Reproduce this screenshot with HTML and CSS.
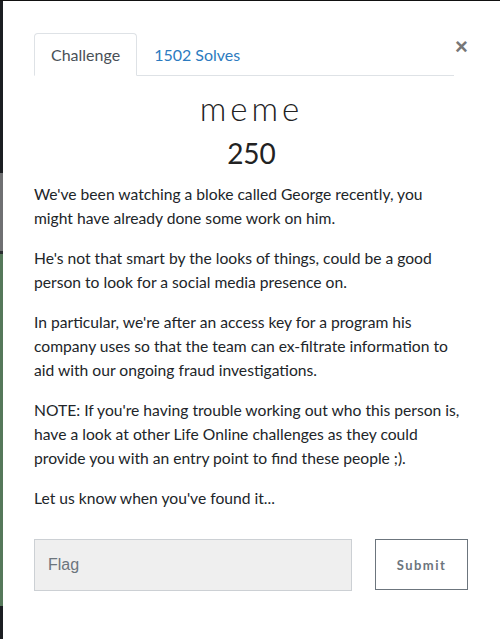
FILE: index.html
```html
<!DOCTYPE html>
<html>
<head>
<meta charset="utf-8">
<link rel="stylesheet" href="styles.css">
</head>
<body>
<div class="page">
  <div class="backdrop-strip">
    <div class="seg seg-dark1"></div>
    <div class="seg seg-gray"></div>
    <div class="seg seg-dark2"></div>
    <div class="seg seg-green"></div>
    <div class="seg seg-dark3"></div>
  </div>
  <div class="modal">
    <div class="modal-body">
      <div class="tabs-row">
        <ul class="nav-tabs">
          <li class="tab active">Challenge</li>
          <li class="tab link">1502 Solves</li>
        </ul>
        <button class="close">&times;</button>
      </div>
      <h2 class="chal-name">meme</h2>
      <h3 class="chal-value">250</h3>
      <div class="desc">
        <p>We've been watching a bloke called George recently, you might have already done some work on him.</p>
        <p>He's not that smart by the looks of things, could be a good person to look for a social media presence on.</p>
        <p>In particular, we're after an access key for a program his company uses so that the team can ex-filtrate information to aid with our ongoing fraud investigations.</p>
        <p>NOTE: If you're having trouble working out who this person is, have a look at other Life Online challenges as they could provide you with an entry point to find these people ;).</p>
        <p>Let us know when you've found it...</p>
      </div>
      <div class="submit-row">
        <input class="flag-input" type="text" placeholder="Flag">
        <button class="submit-btn">Submit</button>
      </div>
    </div>
  </div>
</div>
</body>
</html>
```
FILE: styles.css
```css
html, body {
  margin: 0;
  padding: 0;
  background: #ffffff;
}
body {
  width: 500px;
  height: 639px;
  overflow: hidden;
  font-family: Lato, "Liberation Sans", sans-serif;
}
.page {
  display: flex;
  height: 639px;
  border-top: 1px solid #111;
  box-sizing: border-box;
}
.backdrop-strip {
  width: 3px;
  display: flex;
  flex-direction: column;
  flex-shrink: 0;
}
.seg-dark1 { height: 172px; background: #1b1e22; }
.seg-gray { height: 78px; background: #6f7072; }
.seg-dark2 { height: 3px; background: #2a2d31; }
.seg-green { height: 352px; background: #55785a; }
.seg-dark3 { flex: 1; background: #1b1e22; }

.modal {
  flex: 1;
  background: #fff;
}
.modal-body {
  padding: 32px 31px 0 31px;
}
.tabs-row {
  display: flex;
  align-items: flex-start;
}
.nav-tabs {
  flex: 1;
  display: flex;
  list-style: none;
  margin: 0;
  padding: 0;
  border-bottom: 1px solid #dee2e6;
}
.tab {
  font-size: 16px;
  padding: 0 16px;
  height: 41px;
  line-height: 41px;
  border: 1px solid transparent;
  border-top-left-radius: 4px;
  border-top-right-radius: 4px;
  margin-bottom: -1px;
}
.tab.active {
  color: #495057;
  border-color: #dee2e6 #dee2e6 #fff;
  background: #fff;
}
.tab.link {
  color: #2c7bc0;
}
.close {
  width: 15px;
  margin: 4px 0 0 0;
  padding: 0;
  border: 0;
  background: none;
  font-family: "Liberation Sans", sans-serif;
  font-size: 22px;
  font-weight: bold;
  line-height: 20px;
  color: #777;
  text-align: center;
}
.chal-name {
  margin: 14px 0 0 0;
  text-align: center;
  font-family: Lato, sans-serif;
  font-weight: 300;
  font-size: 33px;
  letter-spacing: 4px;
  line-height: 36px;
  color: #222;
}
.chal-value {
  margin: 9px 0 0 0;
  text-align: center;
  font-family: Lato, sans-serif;
  font-weight: 400;
  font-size: 28px;
  line-height: 36px;
  color: #222;
}
.desc {
  margin: 11px 4px 0 0;
  color: #212529;
  font-size: 15.65px;
  line-height: 24px;
}
.desc p {
  margin: 0 0 16px 0;
}
.submit-row {
  display: flex;
  align-items: flex-start;
  margin-top: 29px;
}
.flag-input {
  width: 318px;
  height: 52px;
  box-sizing: border-box;
  border: 1px solid #ccd0d4;
  background: #efefef;
  padding: 0 13px;
  font-family: "Liberation Sans", Arial, sans-serif;
  font-size: 16px;
  color: #495057;
  border-radius: 0;
  outline: none;
}
.flag-input::placeholder {
  color: #6c757d;
}
.submit-btn {
  margin-left: 23px;
  width: 93px;
  height: 51px;
  box-sizing: border-box;
  border: 1px solid #6c757d;
  background: #fff;
  color: #6c757d;
  font-family: Lato, sans-serif;
  font-weight: bold;
  font-size: 13px;
  letter-spacing: 1.5px;
  border-radius: 0;
}
```
